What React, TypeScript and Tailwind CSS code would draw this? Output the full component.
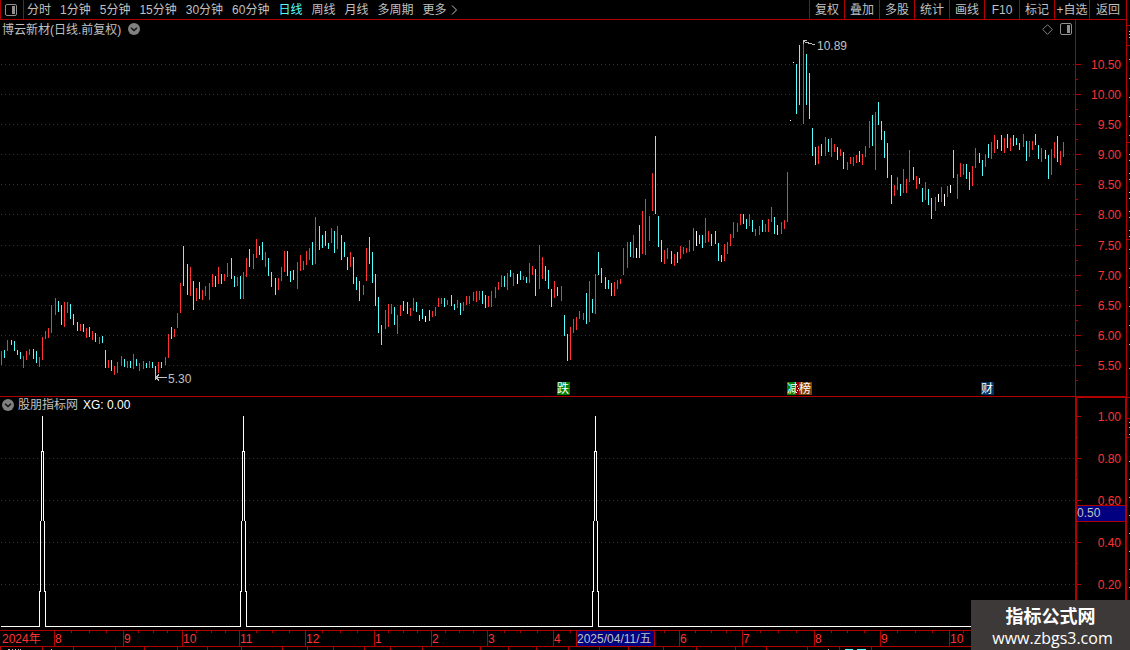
import React, { useState } from 'react';

const PLOT_WIDTH = 1075;

const periods = ['分时', '1分钟', '5分钟', '15分钟', '30分钟', '60分钟', '日线', '周线', '月线', '多周期'];
const actions = ['复权', '叠加', '多股', '统计', '画线', 'F10', '标记', '+自选', '返回'];

const prices = ['10.50', '10.00', '9.50', '9.00', '8.50', '8.00', '7.50', '7.00', '6.50', '6.00', '5.50'];
const priceRows = [64, 94, 124, 154, 184, 214, 245, 275, 305, 335, 365];
const levels = ['1.00', '0.80', '0.60', '0.40', '0.20'];
const levelRows = [416, 458, 500, 542, 584];

// x, high, low, colour (r = up, c = down, w = flat)
const barData = `
1 351 365 r,4 350 358 c,7 340 351 r,11 340 345 c,14 341 351 c,17 350 355 c,20 352 359 c,23 356 368 r,26 351 360 r,29 349 355 r,
33 349 359 c,36 351 363 c,39 357 367 r,42 337 360 r,45 331 339 r,48 328 338 r,51 305 333 r,55 298 315 r,58 301 312 c,61 305 325 c,
64 302 327 r,67 302 313 r,70 304 319 c,73 314 325 c,77 322 331 c,80 324 331 r,83 324 332 c,86 328 338 r,89 327 337 c,92 331 340 r,
95 333 342 c,99 337 344 r,102 336 343 c,105 350 368 c,108 360 368 r,111 360 371 c,114 366 375 r,117 362 373 r,121 356 366 r,124 359 367 c,
127 361 368 r,130 361 368 c,133 354 369 r,136 359 366 c,139 363 371 r,143 361 369 r,146 363 368 c,149 361 368 r,152 362 368 c,155 366 377 c,
158 362 373 r,161 362 368 c,165 357 365 r,168 334 358 r,171 327 339 c,174 329 337 r,177 313 328 r,180 283 313 r,183 246 286 c,187 264 295 c,
190 267 296 r,193 281 310 c,196 288 301 r,199 282 299 c,202 290 300 r,205 286 296 r,209 283 300 r,212 274 287 r,215 276 287 c,218 267 284 r,
221 274 284 c,224 274 281 r,227 263 277 r,231 258 279 c,234 276 287 c,237 277 286 r,240 276 299 c,243 272 299 r,246 258 277 r,249 249 267 c,
253 254 269 r,256 239 258 r,259 246 255 c,262 242 260 c,265 252 267 r,268 258 276 c,271 272 287 c,275 278 295 c,278 278 290 r,281 267 281 r,
284 251 272 r,287 251 276 c,290 271 282 c,293 270 280 c,297 262 289 r,300 255 271 r,303 261 270 r,306 251 265 r,309 248 260 r,312 242 265 c,
315 217 264 r,319 226 250 c,322 235 248 c,325 231 246 c,328 243 249 c,331 228 243 r,334 231 253 c,337 226 249 r,341 235 260 c,344 242 257 c,
347 257 270 c,350 252 267 r,353 257 284 c,356 277 290 c,359 281 301 c,363 285 295 r,366 248 281 r,369 237 264 c,372 252 283 c,375 274 306 c,
378 297 333 c,381 325 345 c,385 310 329 r,388 304 327 r,391 304 314 r,394 307 325 c,397 315 334 r,400 305 316 r,403 301 311 c,407 302 314 c,
410 308 316 r,413 298 311 r,416 302 312 c,419 315 321 c,422 309 319 c,425 316 322 w,429 310 321 c,432 311 317 r,435 307 316 r,438 298 307 r,
441 298 304 r,444 298 307 c,447 300 305 r,451 295 306 c,454 304 310 c,457 300 308 r,460 303 315 c,463 302 311 r,466 296 305 r,469 296 304 r,
473 292 301 r,476 291 302 r,479 291 300 r,482 291 304 c,485 295 308 c,488 296 307 r,491 291 307 r,495 287 298 r,498 282 290 r,501 275 287 r,
504 276 287 c,507 273 290 r,510 270 277 c,513 273 286 r,517 274 284 w,520 271 280 c,523 276 280 r,526 277 283 c,529 263 283 r,532 266 275 r,
535 269 296 c,539 245 289 r,542 257 279 r,545 266 281 c,548 270 289 c,551 289 307 c,554 281 298 r,557 287 296 c,561 286 301 r,564 315 336 c,
567 334 361 c,570 327 360 r,573 319 333 r,576 317 330 r,579 311 319 r,583 313 320 r,586 293 324 c,589 281 322 r,592 299 313 c,595 274 314 r,
598 252 275 c,601 268 283 c,605 277 289 c,608 280 289 c,611 283 296 c,614 282 296 r,617 280 289 r,620 279 284 r,623 248 275 r,627 242 268 r,
630 242 257 c,633 235 258 r,636 248 258 w,639 225 258 c,642 211 254 r,645 199 255 r,649 216 241 r,652 173 211 r,655 136 214 c,658 216 247 c,
661 240 262 c,664 250 264 r,667 248 259 r,671 251 264 c,674 254 266 r,677 252 263 c,680 246 259 r,683 247 254 r,686 248 253 r,689 240 252 r,
693 228 251 r,696 231 246 w,699 235 244 c,702 235 248 c,705 218 243 r,708 231 242 r,711 234 246 c,715 231 244 c,718 243 261 c,721 255 262 c,
724 244 261 r,727 242 254 r,730 234 246 r,733 222 238 r,737 223 232 r,740 214 225 r,743 214 224 c,746 219 229 c,749 214 226 r,752 220 232 c,
755 229 236 r,759 226 235 r,762 220 232 c,765 224 232 r,768 219 232 r,771 207 222 r,774 217 234 c,777 225 235 c,781 222 234 r,784 220 229 r,
787 172 222 r,790 120 121 w,793 62 63 w,796 64 114 c,799 45 105 c,803 42 124 r,806 54 105 c,809 73 119 c,812 128 156 c,815 147 165 c,
818 146 164 r,821 144 156 c,825 137 156 r,828 139 152 c,831 138 157 r,834 144 152 r,837 147 160 c,840 149 156 r,843 152 169 c,847 162 170 r,
850 157 164 r,853 157 166 r,856 155 163 r,859 151 162 c,862 154 165 r,865 146 157 r,869 121 148 r,872 115 146 c,875 112 170 r,878 102 125 c,
881 121 140 c,884 131 158 c,887 143 178 c,891 175 204 c,894 185 196 r,897 177 190 r,900 184 196 c,903 169 193 r,906 179 193 r,909 150 182 r,
913 167 180 c,916 176 189 r,919 178 184 c,922 188 202 c,925 182 200 r,928 189 205 c,931 198 219 c,935 197 211 r,938 194 202 w,941 187 202 r,
944 194 206 w,947 186 197 r,950 185 193 w,953 150 178 c,957 174 199 r,960 163 177 r,963 164 175 r,966 164 179 c,969 172 190 c,972 166 186 r,
975 148 168 r,979 153 163 c,982 160 176 c,985 154 167 r,988 144 158 c,991 142 159 r,994 135 153 r,997 140 149 c,1001 135 151 c,1004 138 153 r,
1007 134 148 c,1010 138 151 r,1013 135 146 c,1016 138 145 c,1019 143 150 c,1023 134 147 r,1026 141 161 c,1029 141 157 r,1032 141 150 r,
1035 134 145 c,1038 145 159 c,1041 148 162 r,1045 150 159 c,1048 155 179 c,1051 149 175 r,1054 142 158 r,1057 136 162 c,1060 151 165 r,1063 142 157 r`;

const colours: Record<string, string> = { r: '#ff3232', c: '#54ffff', w: '#ffffff' };

const bars = barData.split(',').map((row) => {
  const [x, high, low, kind] = row.trim().split(' ');
  return { x: Number(x), high: Number(high), low: Number(low), fill: colours[kind] };
});

const tags = [
  { text: '减', x: 787, className: 'w-[12px] bg-[#008000]' },
  { text: '榜', x: 799, className: 'w-[13px] bg-[#804000]' },
  { text: '跌', x: 557, className: 'w-[13px] bg-[#008000]' },
  { text: '财', x: 981, className: 'w-[13px] bg-[#003366]' },
];

const spikes = [42, 243, 595];

const months = [
  { label: '2024年', start: 0 },
  { label: '8', start: 54 },
  { label: '9', start: 123 },
  { label: '10', start: 182 },
  { label: '11', start: 239 },
  { label: '12', start: 305 },
  { label: '1', start: 374 },
  { label: '2', start: 431 },
  { label: '3', start: 487 },
  { label: '4', start: 553 },
  { label: '2025/04/11/五', start: 576, current: true },
  { label: '', start: 654 },
  { label: '6', start: 679 },
  { label: '7', start: 742 },
  { label: '8', start: 814 },
  { label: '9', start: 880 },
  { label: '10', start: 949 },
];
const monthColumns = months
  .map((m, i) => `minmax(0, ${(months[i + 1]?.start ?? PLOT_WIDTH) - m.start}fr)`)
  .join(' ');

const weekTicks = [
  71, 89, 106, 138, 153, 167, 196, 211, 225, 256, 272, 289, 322, 340, 357, 388, 403, 417, 445, 459, 473, 504, 520, 537,
  570, 664, 695, 711, 726, 760, 778, 796, 831, 847, 864, 897, 915, 932, 963,
];
const footerTicks = [
  0, 42, 73, 115, 144, 177, 207, 241, 282, 307, 333, 364, 390, 422, 480, 508, 536, 568, 599, 628, 663, 696, 735, 766,
  807, 839, 871,
];

const percent = (x: number) => `${(x / PLOT_WIDTH) * 100}%`;

const PanelIcon = () => (
  <svg width="12" height="12" viewBox="0 0 12 12" aria-hidden="true">
    <rect x="0.5" y="0.5" width="11" height="11" rx="1.5" fill="none" stroke="#909090" />
    <rect x="7" y="2" width="3" height="8" fill="#909090" />
  </svg>
);

const DropIcon = () => (
  <svg width="12" height="12" viewBox="0 0 12 12" aria-hidden="true">
    <circle cx="6" cy="6" r="6" fill="#808080" />
    <path d="M3 4.8 6 7.6 9 4.8" fill="none" stroke="#101010" strokeWidth="1.4" />
  </svg>
);

const Toolbar: React.FC = () => {
  const [period, setPeriod] = useState('日线');

  return (
    <header className="flex h-5 border-b border-l border-[#b00000]">
      <button aria-label="侧栏" className="flex w-[23px] items-center border-r border-[#b00000] pl-1">
        <PanelIcon />
      </button>
      <nav className="flex items-center gap-[9px] pl-[3px] whitespace-nowrap">
        {periods.map((name) => (
          <button key={name} onClick={() => setPeriod(name)} className={name === period ? 'text-[#54ffff]' : ''}>
            {name}
          </button>
        ))}
        <button className="flex items-center gap-1">
          更多
          <svg width="7" height="10" viewBox="0 0 7 10" aria-hidden="true">
            <path d="M1 0.5 5.5 5 1 9.5" fill="none" stroke="#c0c0c0" />
          </svg>
        </button>
      </nav>
      <div className="ml-auto flex whitespace-nowrap">
        {actions.map((name) => (
          <button key={name} className="w-[35px] border-l border-[#b00000] last:w-[37px]">
            {name}
          </button>
        ))}
      </div>
    </header>
  );
};

const PriceChart: React.FC = () => (
  <section className="flex">
    <div className="relative min-w-0 flex-1">
      <div className="flex h-[18px] items-center pr-[3px] pl-[2px]">
        <h1 className="pt-[2px]">博云新材(日线.前复权)</h1>
        <button aria-label="选项" className="ml-[7px]">
          <DropIcon />
        </button>
        <button aria-label="标记点" className="ml-auto">
          <svg width="11" height="11" viewBox="0 0 11 11" aria-hidden="true">
            <path d="M5.5 0.7 10.3 5.5 5.5 10.3 0.7 5.5Z" fill="none" stroke="#808080" />
          </svg>
        </button>
        <button aria-label="面板" className="ml-[7px]">
          <PanelIcon />
        </button>
      </div>
      <svg
        className="block h-[358px] w-full"
        viewBox="0 38 1075 358"
        preserveAspectRatio="none"
        shapeRendering="crispEdges"
      >
        {priceRows.map((y) => (
          <line key={y} x1="1" x2="1075" y1={y + 0.5} y2={y + 0.5} stroke="#b00000" strokeDasharray="1 3" />
        ))}
        {bars.map((b) => (
          <rect key={b.x} x={b.x} y={b.high} width="1" height={b.low - b.high} fill={b.fill} />
        ))}
        <path
          d="M803.5 41.5 815 45M803.5 44V40.5H807M155.5 374V380M155.5 377.5H167M156 377.5 159 374.5M156 377.5 159 380.5"
          fill="none"
          stroke="#c0c0c0"
        />
      </svg>
      <span className="absolute top-[18px] leading-4" style={{ left: percent(817) }}>
        10.89
      </span>
      <span className="absolute bottom-[9px] leading-4" style={{ left: percent(168) }}>
        5.30
      </span>
      {tags.map((tag) => (
        <span
          key={tag.text}
          className={`absolute bottom-[1px] h-[13px] overflow-hidden leading-[15px] text-white ${tag.className}`}
          style={{ left: percent(tag.x) }}
        >
          {tag.text}
        </span>
      ))}
      {/* sliver of the tag hidden between its neighbours */}
      <svg
        className="absolute bottom-[1px]"
        style={{ left: percent(796) }}
        width="3"
        height="13"
        viewBox="0 0 3 13"
        shapeRendering="crispEdges"
      >
        <rect width="3" height="13" fill="#900000" />
        <path d="M0 2.5H1M1 4.5H2M2 6.5H3M1 8.5H2M0 10.5H1" stroke="#ffffff" />
      </svg>
    </div>
    <div className="flex w-[51px] border-l border-[#b00000]">
      <svg className="h-[376px] w-[5px]" viewBox="0 20 5 376" shapeRendering="crispEdges">
        {priceRows.map((y) => (
          <path key={y} d={`M0 ${y + 0.5}H5M0 ${y + 15.5}H2`} stroke="#b00000" />
        ))}
      </svg>
      <ul className="flex flex-1 flex-col justify-between pt-[37px] pr-[5px] pb-[22px] text-right leading-4 text-[#ff3232]">
        {prices.map((p) => (
          <li key={p}>{p}</li>
        ))}
      </ul>
    </div>
  </section>
);

const SignalChart: React.FC = () => (
  <section className="flex">
    <div className="min-w-0 flex-1 border-t border-[#b00000]">
      <div className="flex h-4 items-center pl-[2px]">
        <button aria-label="指标选项">
          <DropIcon />
        </button>
        <h2 className="ml-[4px]">股朋指标网</h2>
        <span className="ml-[5px] text-white">XG: 0.00</span>
      </div>
      <svg
        className="block h-[217px] w-full"
        viewBox="0 413 1075 217"
        preserveAspectRatio="none"
        shapeRendering="crispEdges"
      >
        {levelRows.slice(1).map((y) => (
          <line key={y} x1="1" x2="1075" y1={y + 0.5} y2={y + 0.5} stroke="#b00000" strokeDasharray="1 3" />
        ))}
        <path d="M1 626.5H40M45 626.5H241M246 626.5H593M598 626.5H1075" stroke="#ffffff" />
        {spikes.map((x) => (
          <path
            key={x}
            d={`M${x + 0.5} 416V452M${x - 0.5} 451V521M${x + 1.5} 451V521M${x - 1.5} 521V592M${x + 2.5} 521V592M${x - 2.5} 591V627M${x + 3.5} 591V627`}
            stroke="#ffffff"
          />
        ))}
      </svg>
    </div>
    <div className="relative flex w-[51px] border-t-2 border-r border-l-2 border-[#b00000]">
      <svg className="h-[232px] w-1" viewBox="0 398 4 232" shapeRendering="crispEdges">
        {levelRows.map((y) => (
          <path key={y} d={`M0 ${y + 0.5}H4M0 ${y + 21.5}H1`} stroke="#b00000" />
        ))}
      </svg>
      <ul className="flex flex-1 flex-col justify-between pt-[11px] pr-1 pb-[37px] text-right leading-4 text-[#ff3232]">
        {levels.map((v) => (
          <li key={v}>{v}</li>
        ))}
      </ul>
      <span className="absolute inset-x-0 top-[107px] border-y border-[#b00000] bg-[#000080] leading-[15px]">0.50</span>
    </div>
  </section>
);

const DateAxis: React.FC = () => (
  <footer className="flex flex-1">
    <div className="relative min-w-0 flex-1">
      <ol
        className="grid h-[17px] border-y border-[#b00000] leading-[14px] text-[#ff3232]"
        style={{ gridTemplateColumns: monthColumns }}
      >
        {months.map((m) => (
          <li
            key={m.start}
            className={`border-l border-[#b00000] pt-px whitespace-nowrap first:border-l-0 first:pl-[2px] ${
              m.current ? 'bg-[#000080] text-[#c0c0c0]' : ''
            }`}
          >
            {m.label}
          </li>
        ))}
      </ol>
      <svg
        className="absolute top-0 left-0 h-5 w-full"
        viewBox="0 630 1075 20"
        preserveAspectRatio="none"
        shapeRendering="crispEdges"
      >
        {weekTicks.map((x) => (
          <path key={x} d={`M${x + 0.5} 631V633`} stroke="#b00000" />
        ))}
        {footerTicks.map((x) => (
          <path key={x} d={`M${x + 0.5} 647V650`} stroke="#b00000" />
        ))}
        <path d="M8 649.5H10M12 649.5H13M15 649.5H16M18 649.5H19M20 649.5H21M51 649.5H52M828 649.5H829" stroke="#c0c0c0" />
        <path d="M845 649.5H853M857 649.5H866" stroke="#54ffff" />
      </svg>
    </div>
    <div className="h-[17px] w-[51px] border-y border-l-2 border-r border-[#b00000]" />
  </footer>
);

const sideMarks = [
  31, 34, 37, 59, 78, 97, 116, 135, 154, 160, 173, 179, 192, 198, 211, 217, 230, 236, 249, 268, 287, 306, 325, 344, 368,
  422, 427, 434, 461, 479, 497, 515, 533, 551, 569, 587,
];

const SideRail: React.FC = () => (
  <aside className="w-1 border-l border-[#b00000]">
    <svg width="3" height="650" viewBox="0 0 3 650" shapeRendering="crispEdges">
      {[25, 45, 142, 239, 397, 418, 437].map((y) => (
        <path key={y} d={`M0 ${y + 0.5}H3`} stroke="#b00000" />
      ))}
      {sideMarks.map((y) => (
        <path key={y} d={`M2 ${y + 0.5}H3`} stroke="#c0c0c0" />
      ))}
    </svg>
  </aside>
);

const App: React.FC = () => (
  <div className="relative flex min-h-screen bg-black font-['Liberation_Sans','Noto_Sans_CJK_SC',sans-serif] text-xs leading-4 text-[#c0c0c0]">
    <main className="flex min-w-0 flex-1 flex-col">
      <Toolbar />
      <PriceChart />
      <SignalChart />
      <DateAxis />
    </main>
    <SideRail />
    <a
      href="#"
      className="absolute right-0 bottom-0 flex h-[50px] w-[159px] flex-col items-center justify-center bg-[#3e3939] pt-1 text-white"
    >
      <strong className="text-lg leading-[22px] font-bold">指标公式网</strong>
      <span className="pl-1 font-['Open_Sans',sans-serif] text-base leading-5">www.zbgs3.com</span>
    </a>
  </div>
);

export default App;
